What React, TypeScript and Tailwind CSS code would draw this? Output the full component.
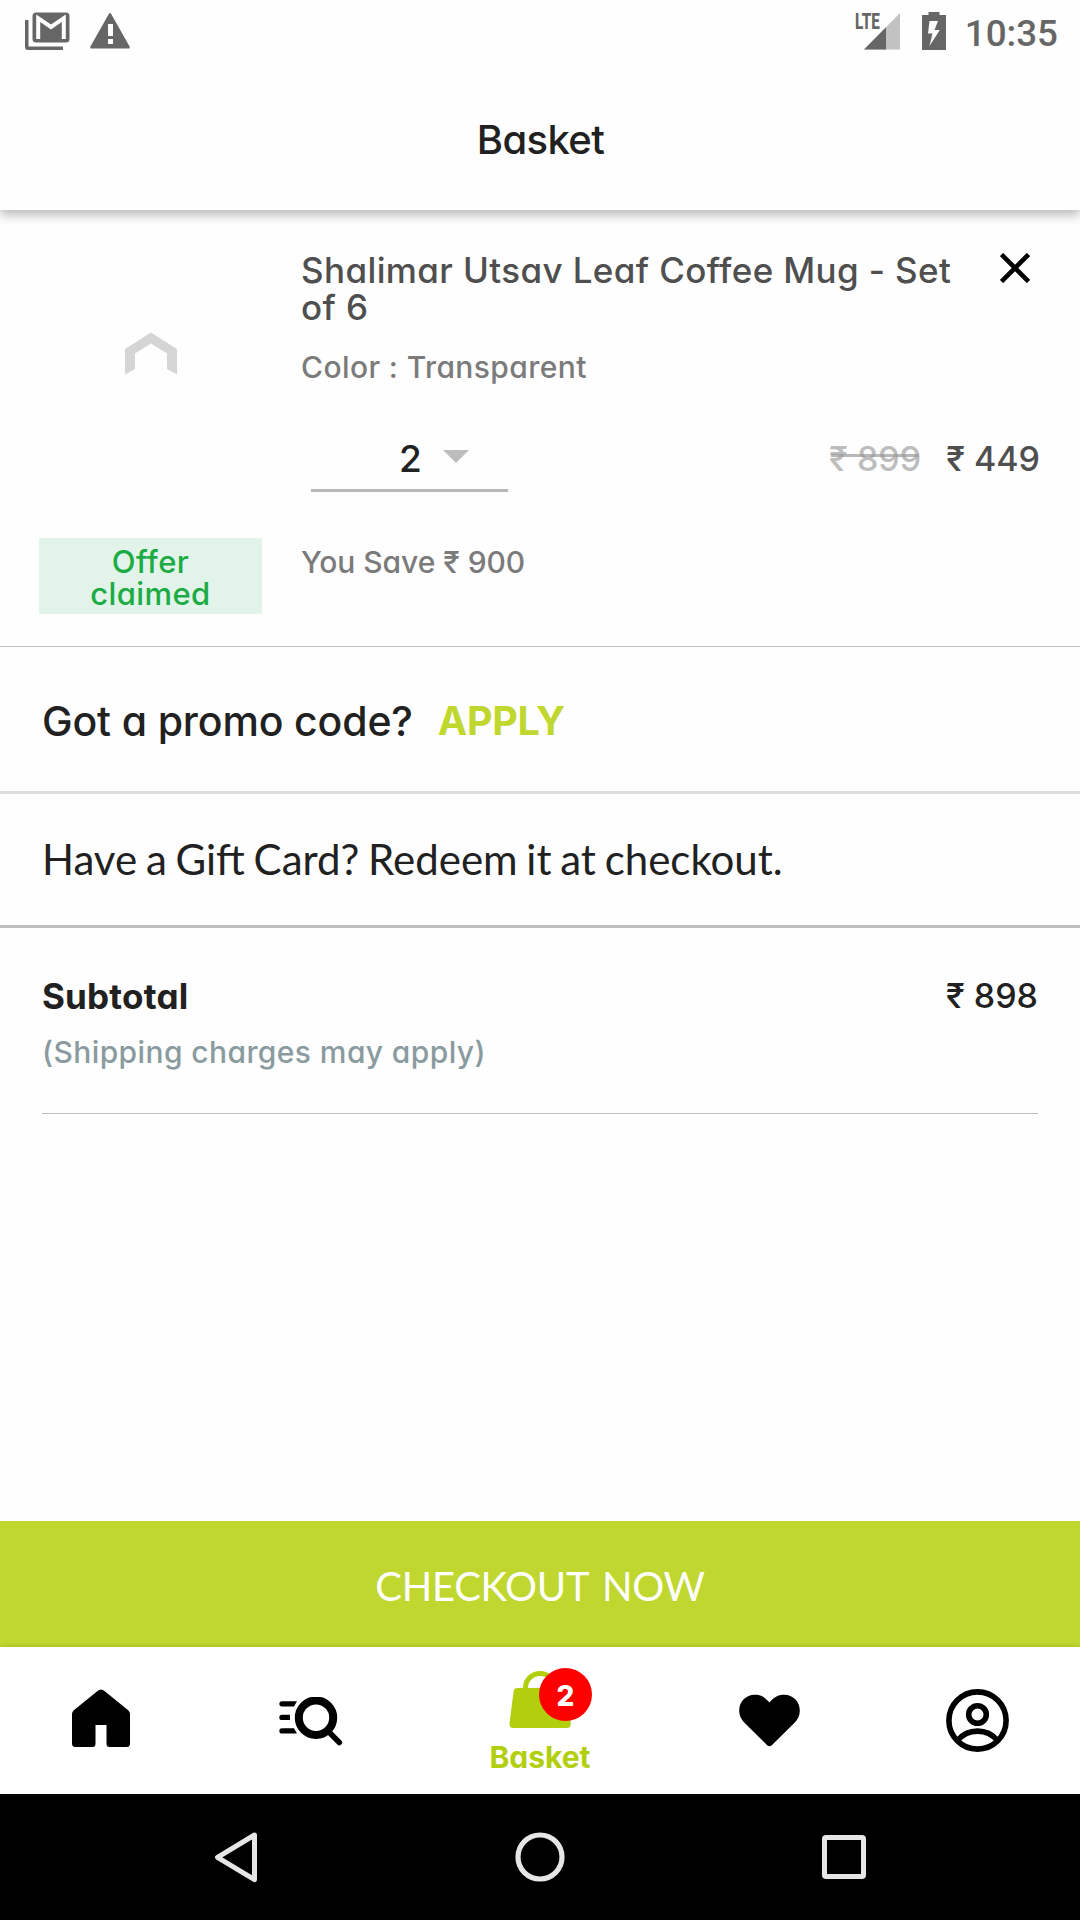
const inter = "font-['Inter',sans-serif] [font-feature-settings:'cv11','ss03']";
const lato = "font-['Lato',sans-serif]";
const roboto = "font-['Roboto',sans-serif]";

function StatusBar() {
  return (
    <div className="flex h-[63px] items-start text-[#666666]">
      <svg className="mt-3 ml-[25px] h-[39px] w-[45px]" viewBox="0 0 45 39">
        <path d="M0 8h3.5v26.5H38V38H3a3 3 0 0 1-3-3z" fill="currentColor" />
        <rect x="7.5" y="0.5" width="37" height="30" rx="3.5" fill="currentColor" />
        <path d="M13.2 27V6.2L26 15l12.8-8.800V27" fill="none" stroke="#fff" strokeWidth="4" />
      </svg>
      <svg className="mt-[13px] ml-5 h-9 w-10" viewBox="0 0 40 36">
        <path
          fillRule="evenodd"
          d="M18.800 0.900q1.200-1.600 2.400 0L39.600 33.500q.6 2-1.200 2.100H1.600Q-.2 35.500.4 33.500zM18 11h5v12h-5zm0 15h5v5h-5z"
          fill="currentColor"
        />
      </svg>
      <div className="ml-auto flex items-start">
        <span className={`${roboto} mt-3 w-[9px] origin-left scale-x-[0.68] text-[22.5px] leading-[19px] font-extrabold`}>LTE</span>
        <svg className="mt-[13px] h-[37px] w-9" viewBox="0 0 36 37">
          <path d="M36 0v36.500H0z" fill="#c2c2c2" />
          <path d="M22 14.200v22.300H0z" fill="currentColor" />
        </svg>
        <svg className="mt-3 ml-[22px] h-[38px] w-6" viewBox="0 0 24 38">
          <path
            fillRule="evenodd"
            d="M6.500 0h11v3H24v35H0V3h6.500zM7.500 9L6 21.500h4.500L7.500 34 17.800 18H12.500L16 9z"
            fill="currentColor"
          />
        </svg>
        <span className={`${roboto} mt-3 mr-[22px] ml-[19px] text-[36.75px] leading-[43px] font-medium`}>10:35</span>
      </div>
    </div>
  );
}

function Header() {
  return (
    <header className="relative z-10 h-[210px] shrink-0 bg-[#fefefe] shadow-[0_5px_10px_rgba(0,0,0,0.27)]">
      <StatusBar />
      <h1 className={`${inter} flex h-[147px] items-center justify-center pt-[6px] pl-px text-[40px] font-[450] tracking-[-0.6px] text-[#212121]`}>
        Basket
      </h1>
    </header>
  );
}

function CartItem() {
  return (
    <section className={`${inter} flex h-[437px] shrink-0 border-b border-[#bdbdbd] pl-[39px] font-[450]`}>
      <div className="flex w-[223px] flex-col">
        <div className="flex h-[328px] items-start justify-center pt-[122px]">
          <svg className="h-[43px] w-[52px]" viewBox="0 0 52 43">
            <path d="M26 0.500L52 17v25.500l-10-5.500V21.500L26 11.500 10 21.500V37L0 42.500V17z" fill="#d5d5d5" />
          </svg>
        </div>
        <div className="flex h-[76px] flex-col items-center bg-[#e2f3e9] pt-[8px] text-[31px] leading-8 tracking-[0.4px] text-[#1cab45]">
          <span>Offer</span>
          <span>claimed</span>
        </div>
      </div>
      <div className="ml-[39px] flex w-[739px] flex-col pt-[42px]">
        <div className="flex justify-between">
          <p className="text-[35px] leading-[37px] tracking-[0.38px] text-[#4f4f4f]">
            Shalimar Utsav Leaf Coffee Mug - Set
            <br />
            of 6
          </p>
          <svg className="mt-px mr-[10px] h-[30px] w-[30px]" viewBox="0 0 30 30">
            <path d="M1.500 1.500l27 27M28.500 1.500l-27 27" stroke="#000" strokeWidth="4.600" />
          </svg>
        </div>
        <p className="mt-[23px] text-[30px] leading-9 tracking-[0.4px] text-[#7b7b7b]">Color : Transparent</p>
        <div className="mt-[51px] flex h-[56px] items-start">
          <div className="ml-[10px] flex h-[56px] w-[197px] border-b-[3px] border-[#b8b8b8] pl-[88px] text-[#212121]">
            <span className="w-[44px] pt-px text-[37px] leading-[44px] font-medium">2</span>
            <svg className="mt-[14px] h-[13px] w-[26px]" viewBox="0 0 26 13">
              <path d="M0 0h26L13 13z" fill="#bdbdbd" />
            </svg>
          </div>
          <div className="ml-auto flex pt-px text-[34px] leading-[44px]">
            <span className="relative text-[#bdbdbd]">
              ₹ 899
              <span className="absolute top-[17px] right-[2px] left-[2px] h-[3px] bg-[#999999]/70" />
            </span>
            <span className="ml-[25px] text-[#4f4f4f]">₹ 449</span>
          </div>
        </div>
        <p className="mt-[52px] text-[30px] leading-9 tracking-[-0.05px] text-[#7b7b7b]">You Save ₹ 900</p>
      </div>
    </section>
  );
}

function Summary() {
  return (
    <>
      <section className={`${inter} flex h-[147px] shrink-0 items-center gap-[25px] border-b-[3px] border-[#dddddd] pt-[5px] pl-[42px]`}>
        <span className="text-[41px] font-[450] tracking-[-0.15px] text-[#212121]">Got a promo code?</span>
        <span className="text-[39.5px] font-bold tracking-[-0.3px] text-[#c0d72f]">APPLY</span>
      </section>
      <section className={`${lato} flex h-[134px] shrink-0 items-center border-b-[3px] border-[#bdbdbd] pl-[42px] text-[42px] [word-spacing:-2px] text-[#212121]`}>
        Have a Gift Card? Redeem it at checkout.
      </section>
      <section className={`${inter} mx-[42px] flex shrink-0 flex-col border-b border-[#bdbdbd] pt-[46px] pb-[43px]`}>
        <div className="flex justify-between leading-[44px] text-[#212121]">
          <span className="text-[35px] font-bold tracking-[0.2px]">Subtotal</span>
          <span className="text-[34px] font-medium">₹ 898</span>
        </div>
        <p className="mt-4 text-[30px] leading-9 font-[450] tracking-[0.4px] text-[#8a9ba0]">(Shipping charges may apply)</p>
      </section>
    </>
  );
}

function TabBar() {
  return (
    <nav className="relative flex h-[147px] shrink-0 bg-white shadow-[0_-1px_4px_rgba(0,0,0,0.12)]">
      <div className="flex w-[202px] justify-center pt-[42px]">
        <svg className="h-[60px] w-[60px]" viewBox="0 0 60 60">
          <path
            d="M26.500 2q3.500-3 7 0L57.500 21.500Q59 23 59 25v29.500q0 3.500-3.500 3.500h-17q-3 0-3-3.500V36H24.500v18.500q0 3.500-3 3.500H4.500Q1 58 1 54.500V25q0-2 1.500-3.500z"
            fill="#000"
          />
        </svg>
      </div>
      <div className="flex w-[217px] justify-center pt-[50px]">
        <svg className="h-[50px] w-16" viewBox="0 0 64 50">
          <path
            d="M3 4.200h15l-3 5.300H3a2.650 2.650 0 0 1 0-5.300zM3 17.700h8v5.400H3a2.700 2.700 0 0 1 0-5.400zM3 31.300h12l3 5.300H3a2.650 2.650 0 0 1 0-5.300z"
            fill="#000"
          />
          <circle cx="37" cy="20.700" r="17.200" fill="none" stroke="#000" strokeWidth="8" />
          <path d="M49 34L60.300 45.500" stroke="#000" strokeWidth="5.500" strokeLinecap="round" />
        </svg>
      </div>
      <div className="flex w-[242px] flex-col items-center pt-6">
        <div className="relative">
          <svg className="h-[57px] w-[62px]" viewBox="0 0 62 57">
            <path d="M16.500 20v-3.500a14.500 14 0 0 1 29 0V20" fill="none" stroke="#b1cf0d" strokeWidth="5" />
            <path d="M8.500 17h45q3.700 0 4.200 3.700l4 32q.2 4.300-4 4.300H4.500Q.3 57 .5 52.700l4-32Q4.900 17 8.500 17z" fill="#b1cf0d" />
          </svg>
          <span className={`${inter} absolute -top-[3px] left-[30px] flex h-[53px] w-[53px] items-center justify-center rounded-full bg-[#ff0000] pt-[2px] text-[28px] leading-none font-extrabold text-white`}>
            2
          </span>
        </div>
        <span className={`${inter} mt-[11px] text-[30px] leading-9 font-bold text-[#b1cf0d]`}>Basket</span>
      </div>
      <div className="flex w-[217px] justify-center pt-[47px]">
        <svg className="h-[53px] w-[61px]" viewBox="0 0 61 53">
          <path d="M30.500 8.500C36 2 40 .7 45.300.7 54 .7 60.800 7.500 60.800 16.500c0 5-2 9-5 12L32.500 51.500q-2 1.600-4 0L5.200 28.500c-3-3-5-7-5-12C.2 7.500 7 .7 15.700.7 21 .7 25 2 30.500 8.500z" fill="#000" />
        </svg>
      </div>
      <div className="flex w-[198px] justify-center pt-[42px]">
        <svg className="h-[63px] w-[63px]" viewBox="0 0 63 63" fill="none" stroke="#000" strokeWidth="5.600">
          <circle cx="31.500" cy="31.500" r="28.600" />
          <circle cx="31.500" cy="25.500" r="8.800" />
          <path d="M11.500 51.500C22 39 41 39 51.500 51.500" />
        </svg>
      </div>
    </nav>
  );
}

function SystemNav() {
  return (
    <div className="flex h-[126px] shrink-0 items-start bg-black pt-[38px]">
      <svg className="ml-[214px] h-[51px] w-11" viewBox="0 0 44 51" fill="none" stroke="#e6e6e6" strokeWidth="5" strokeLinejoin="round">
        <path d="M40.500 3L3.500 25.300l37 22.300z" />
      </svg>
      <svg className="ml-[257px] h-[50px] w-[50px]" viewBox="0 0 50 50" fill="none" stroke="#e6e6e6" strokeWidth="5.200">
        <circle cx="25" cy="25" r="22" />
      </svg>
      <svg className="mt-[3px] ml-[257px] h-[44px] w-[44px]" viewBox="0 0 44 44" fill="none" stroke="#e6e6e6" strokeWidth="5">
        <rect x="2.500" y="2.500" width="39" height="39" rx="1.500" />
      </svg>
    </div>
  );
}

export default function App() {
  return (
    <div className="flex h-[1920px] w-[1080px] flex-col overflow-hidden bg-[#fefefe] whitespace-nowrap">
      <Header />
      <main className="flex grow flex-col">
        <CartItem />
        <Summary />
      </main>
      <button className={`${lato} h-[126px] shrink-0 bg-[#c0d72f] pt-[3px] text-[40px] tracking-[-0.3px] [word-spacing:4px] text-white`}>
        CHECKOUT NOW
      </button>
      <TabBar />
      <SystemNav />
    </div>
  );
}
